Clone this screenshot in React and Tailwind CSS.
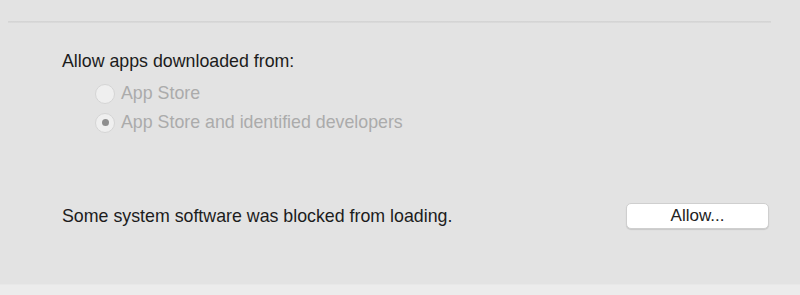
export default function App() {
  const font = { fontFamily: '"Liberation Sans", Arial, sans-serif' };
  return (
    <div className="w-[800px] h-[295px] bg-[#e3e3e3] flex flex-col overflow-hidden" style={font}>
      <div className="h-[21px]" />
      <div className="ml-[8px] w-[763px] h-[2px] bg-gradient-to-b from-[#d2d2d2] to-[#dcdcdc]" />
      <div className="pl-[62px] pt-[28px] flex flex-col">
        <div className="text-[17.8px] leading-[21px] text-[#1c1c1c]">Allow apps downloaded from:</div>
        <div className="pl-[33px] pt-[11px] flex flex-col gap-[8px]">
          <div className="flex items-center gap-[6px] h-[21px]">
            <div className="w-[20px] h-[20px] rounded-full border border-[#d5d5d5] bg-[#efefef]" />
            <span className="text-[17.8px] leading-[21px] text-[#ababab]">App Store</span>
          </div>
          <div className="flex items-center gap-[6px] h-[21px]">
            <div className="w-[20px] h-[20px] rounded-full border border-[#d5d5d5] bg-[#efefef] flex items-center justify-center">
              <div className="w-[7px] h-[7px] rounded-full bg-[#8e8e8e]" />
            </div>
            <span className="text-[17.8px] leading-[21px] text-[#ababab]">App Store and identified developers</span>
          </div>
        </div>
      </div>
      <div className="flex items-center justify-between pl-[62px] pr-[31px] mt-[70px]">
        <span className="text-[17.8px] leading-[21px] text-[#1c1c1c]">Some system software was blocked from loading.</span>
        <button className="w-[143px] h-[26px] bg-white rounded-[5px] border border-[#cfcfcf] shadow-[0_1px_1px_rgba(0,0,0,0.12)] text-[17px] leading-[20px] text-[#222]">Allow...</button>
      </div>
      <div className="flex-1" />
      <div className="h-[1px] bg-[#e8e8e8]" />
      <div className="h-[10px] bg-[#ececec]" />
    </div>
  );
}
